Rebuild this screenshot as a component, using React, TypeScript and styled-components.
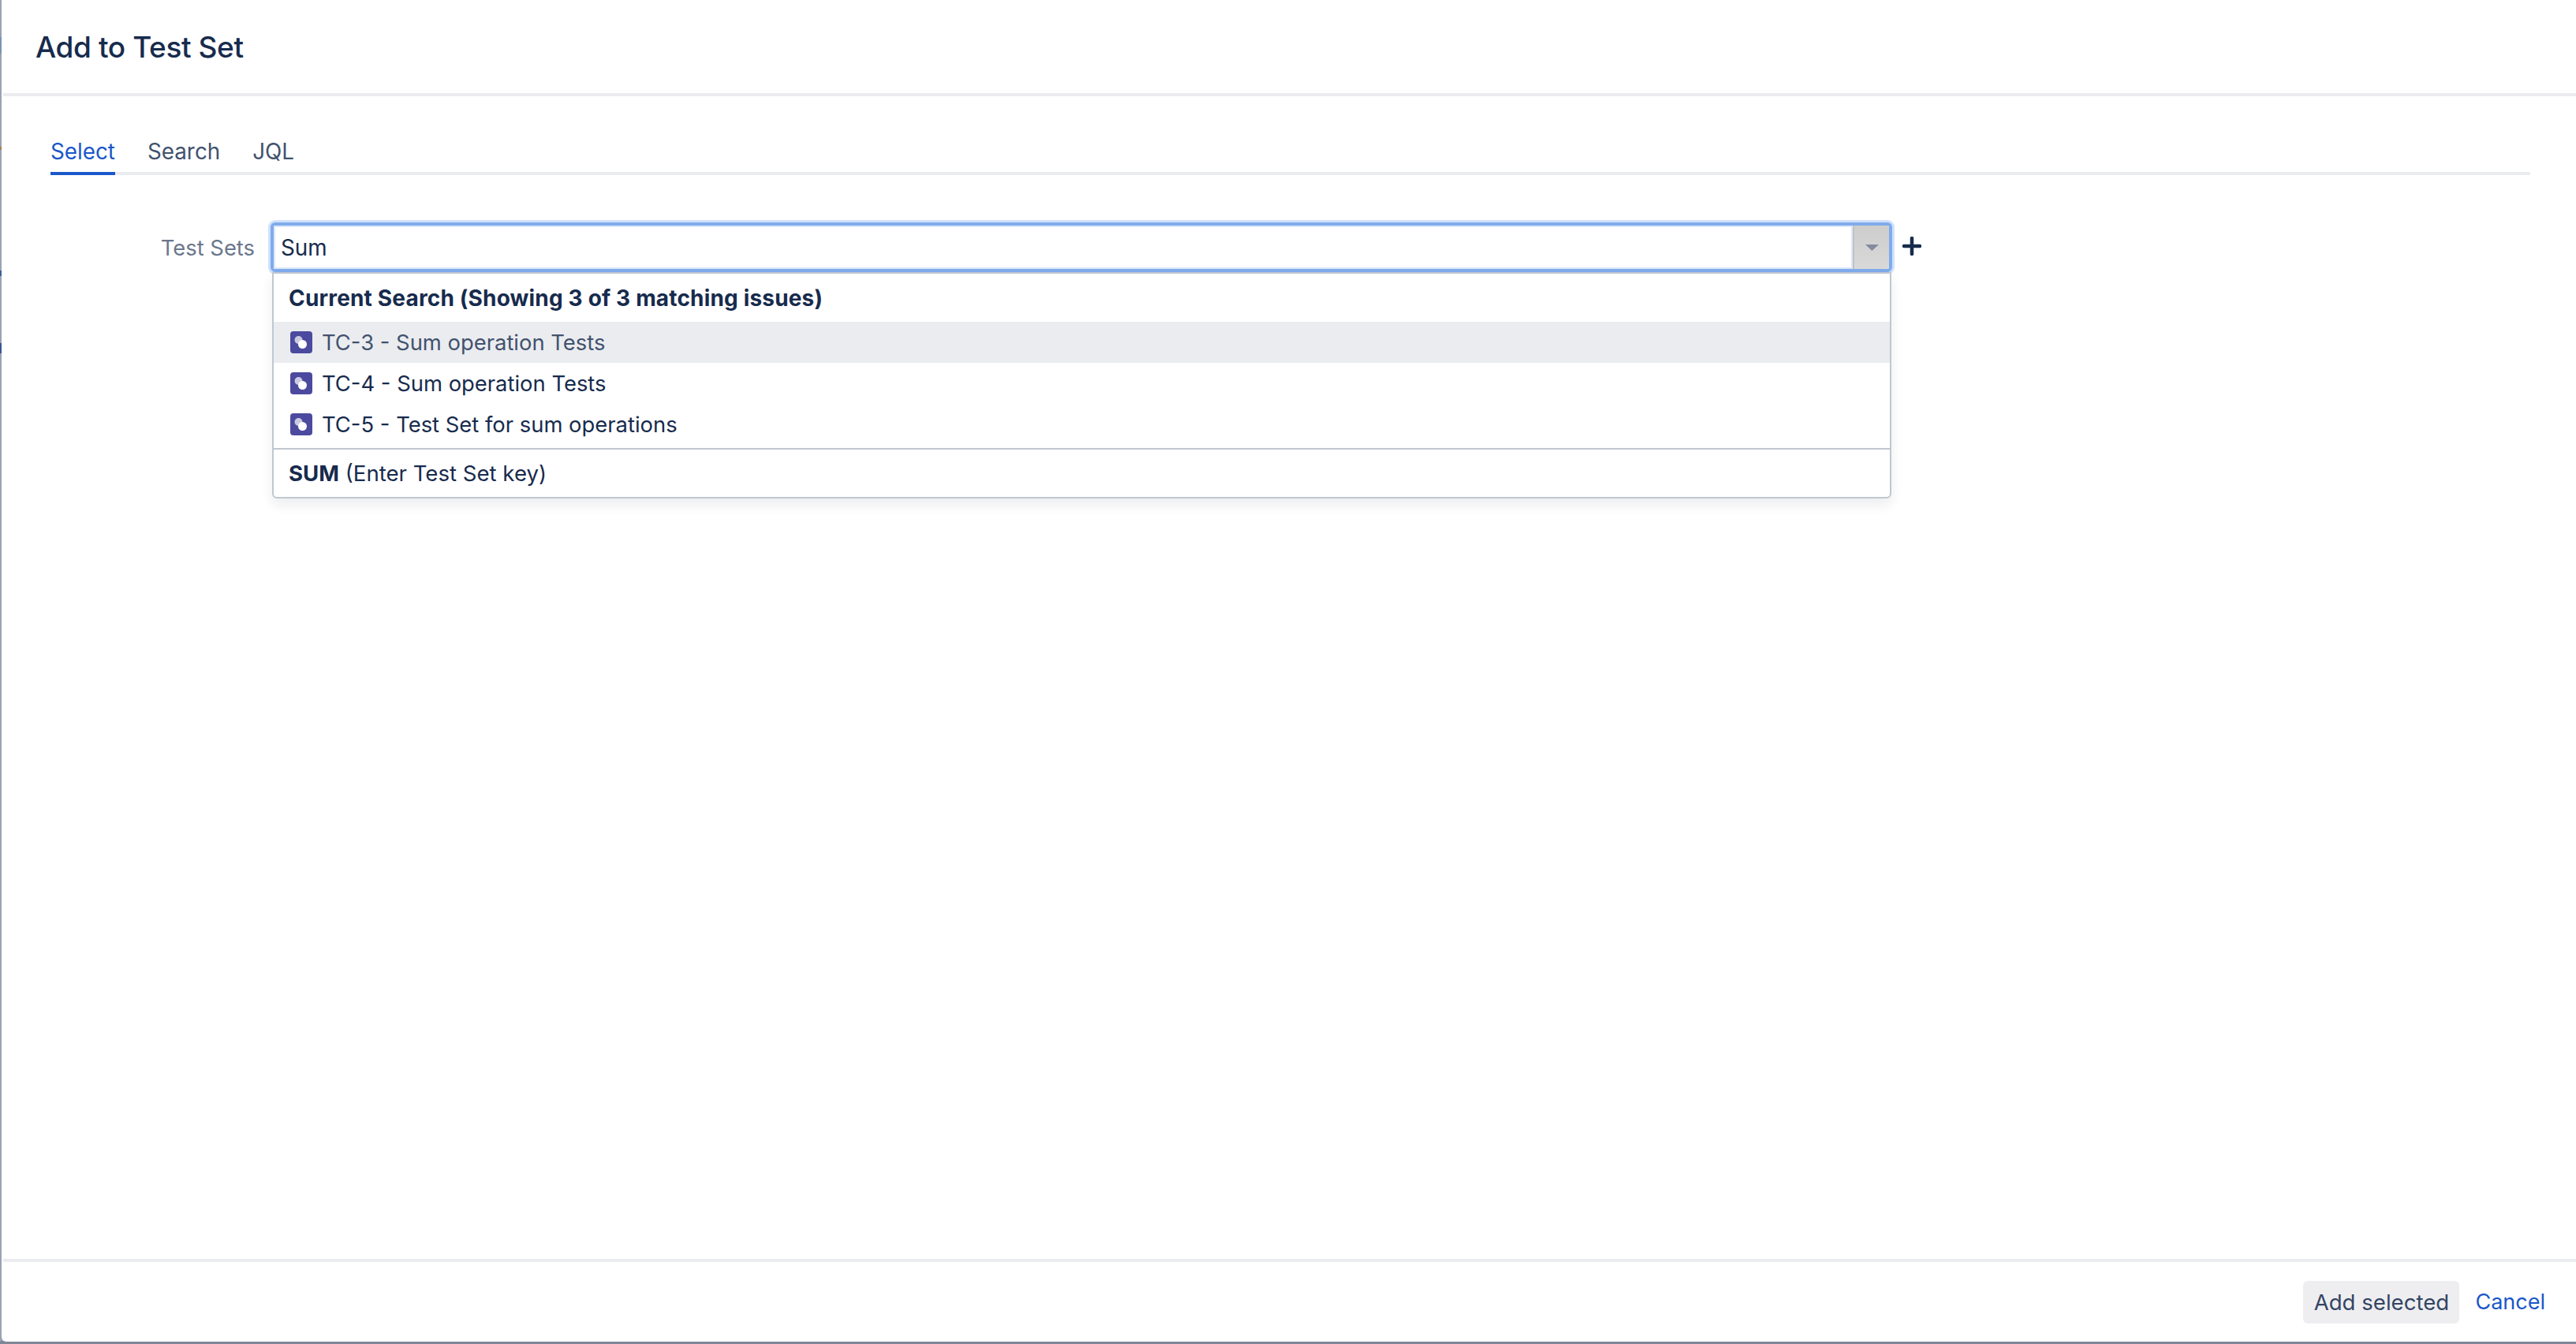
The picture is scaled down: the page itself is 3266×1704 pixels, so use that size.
import React from "react";
import styled, { createGlobalStyle } from "styled-components";

const Global = createGlobalStyle`
  html, body { margin: 0; padding: 0; }
  body { font-family: Inter, "Noto Sans", sans-serif; -webkit-font-smoothing: antialiased; }
`;

const Page = styled.div`
  width: 3266px;
  height: 1704px;
  box-sizing: border-box;
  padding: 0 0 3px 2px;
  background: linear-gradient(
    #9aa2b4 47px, #7a94b5 47px, #7a94b5 68px, #9aa2b4 68px,
    #9aa2b4 186px, #a6834d 186px, #a6834d 190px, #9aa2b4 190px,
    #9aa2b4 343px, #3f5f96 343px, #3f5f96 350px, #9aa2b4 350px,
    #9aa2b4 435px, #3a5690 435px, #3a5690 448px, #9aa2b4 448px,
    #9aa2b4 1700px, #7f8798 1700px
  );
  overflow: hidden;
  display: flex;
`;

const Dialog = styled.div`
  flex: 1;
  display: flex;
  flex-direction: column;
  background: #fff;
  border-bottom-left-radius: 6px;
  padding-left: 2px;
`;

const Header = styled.header`
  height: 118px;
  flex: none;
  display: flex;
  align-items: center;
  padding-left: 41px;
  border-bottom: 4px solid #ebecf0;
`;

const Title = styled.h2`
  margin: 0;
  font-size: 37px;
  font-weight: 500;
  letter-spacing: -0.4px;
  color: #172b4d;
`;

const Body = styled.main`
  flex: 1;
  padding: 50px 58px 0 60px;
  display: flex;
  flex-direction: column;
  min-height: 0;
`;

const Tabs = styled.nav`
  display: flex;
  gap: 41px;
  height: 46px;
  border-bottom: 4px solid #ebecf0;
`;

const Tab = styled.a<{ $active?: boolean }>`
  height: 46px;
  line-height: 40px;
  font-size: 27.8px;
  color: ${(p) => (p.$active ? "#1a57c9" : "#42526e")};
  border-bottom: 4px solid ${(p) => (p.$active ? "#1a57c9" : "transparent")};
`;

const FormRow = styled.div`
  margin-top: 60px;
  display: flex;
  align-items: center;
`;

const Label = styled.label`
  width: 279px;
  padding-right: 20px;
  box-sizing: border-box;
  text-align: right;
  font-size: 27.4px;
  color: #6b778c;
`;

const Field = styled.div`
  position: relative;
  width: 2056px;
  height: 63px;
  box-sizing: border-box;
  border: 4px solid #7fabec;
  border-radius: 6px;
  box-shadow: 0 0 0 3px #cfe1fb;
  display: flex;
  background: #fff;
`;

const Value = styled.div`
  flex: 1;
  padding-left: 9px;
  font-size: 27.8px;
  line-height: 56px;
  color: #172b4d;
  box-shadow: inset 0 0 0 2px #dbe7fb;
`;

const Toggle = styled.div`
  width: 46px;
  background: linear-gradient(#cdcdcd, #d9d9d9);
  border-left: 2px solid #c2c2c2;
  border-radius: 0 3px 3px 0;
  box-sizing: border-box;
  display: flex;
  align-items: center;
  justify-content: center;
`;

const AddIcon = styled.svg`
  width: 24px;
  height: 24px;
  margin-left: 13px;
  margin-top: -3px;
  flex: none;
`;

const Dropdown = styled.div`
  position: absolute;
  top: 59px;
  left: -2px;
  width: 2053px;
  box-sizing: border-box;
  background: #fff;
  border: 2px solid #c1c7d0;
  border-radius: 0 0 6px 6px;
  box-shadow: 0 8px 16px rgba(9, 30, 66, 0.08);
`;

const GroupTitle = styled.div`
  height: 61px;
  line-height: 63px;
  padding-left: 19px;
  font-size: 28px;
  font-weight: 700;
  letter-spacing: 0.17px;
  color: #172b4d;
`;

const Row = styled.div<{ $active?: boolean }>`
  height: 52px;
  display: flex;
  align-items: center;
  gap: 12px;
  padding-left: 21px;
  font-size: 27.4px;
  background: ${(p) => (p.$active ? "#ebecf0" : "transparent")};
  color: ${(p) => (p.$active ? "#42526e" : "#172b4d")};
`;

const EntryRow = styled.div`
  margin-top: 4px;
  height: 60px;
  line-height: 60px;
  padding-left: 19px;
  font-size: 27.6px;
  color: #172b4d;
  border-top: 2px solid #c1c7d0;
  strong { font-weight: 700; }
`;

const Footer = styled.footer`
  height: 101px;
  flex: none;
  border-top: 4px solid #ebecf0;
  display: flex;
  align-items: center;
  justify-content: flex-end;
  gap: 20px;
  padding-right: 39px;
`;

const Primary = styled.button`
  height: 54px;
  width: 198px;
  padding: 0;
  border: none;
  border-radius: 6px;
  background: #eeeef1;
  color: #344563;
  font-family: inherit;
  font-size: 27.6px;
`;

const CancelLink = styled.a`
  font-size: 27px;
  color: #1a57c9;
`;

const SetIcon = () => (
  <svg width="28" height="28" viewBox="0 0 28 28" style={{ flex: "none" }}>
    <rect width="28" height="28" rx="4" fill="#4c4a9e" />
    <circle cx="10.5" cy="11" r="5" fill="#fff" fillOpacity="0.7" />
    <circle cx="15.5" cy="16.5" r="5.5" fill="#fff" />
  </svg>
);

const rows = ["TC-3 - Sum operation Tests", "TC-4 - Sum operation Tests", "TC-5 - Test Set for sum operations"];

export default function App() {
  return (
    <Page>
      <Global />
      <Dialog>
        <Header>
          <Title>Add to Test Set</Title>
        </Header>
        <Body>
          <Tabs>
            <Tab $active>Select</Tab>
            <Tab>Search</Tab>
            <Tab>JQL</Tab>
          </Tabs>
          <FormRow>
            <Label>Test Sets</Label>
            <Field>
              <Value>Sum</Value>
              <Toggle>
                <svg width="17" height="8" viewBox="0 0 17 8">
                  <path d="M0 0h17L8.5 8z" fill="#838b9c" />
                </svg>
              </Toggle>
              <Dropdown>
                <GroupTitle>Current Search (Showing 3 of 3 matching issues)</GroupTitle>
                {rows.map((r, i) => (
                  <Row key={r} $active={i === 0}>
                    <SetIcon />
                    {r}
                  </Row>
                ))}
                <EntryRow>
                  <strong>SUM</strong> (Enter Test Set key)
                </EntryRow>
              </Dropdown>
            </Field>
            <AddIcon viewBox="0 0 24 24">
              <path d="M12 2v20M2 12h20" stroke="#172b4d" strokeWidth="4.5" strokeLinecap="round" fill="none" />
            </AddIcon>
          </FormRow>
        </Body>
        <Footer>
          <Primary>Add selected</Primary>
          <CancelLink>Cancel</CancelLink>
        </Footer>
      </Dialog>
    </Page>
  );
}
